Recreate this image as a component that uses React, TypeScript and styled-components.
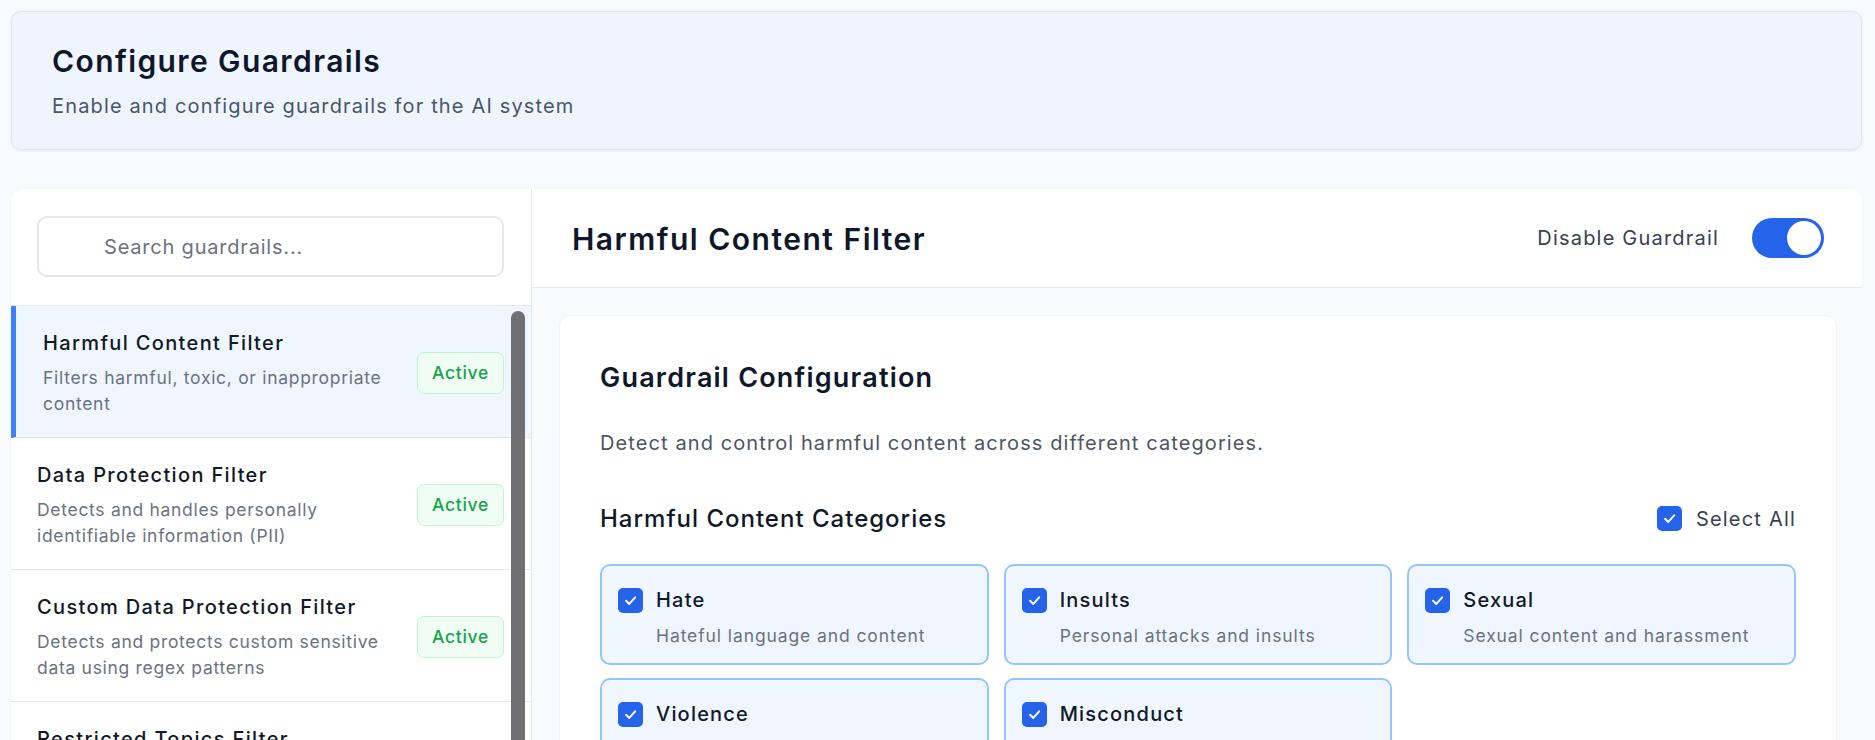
import React from 'react';
import styled, { createGlobalStyle } from 'styled-components';

const GlobalStyle = createGlobalStyle`
  * { box-sizing: border-box; }
  html, body {
    margin: 0;
    padding: 0;
    overflow: hidden;
    background: #f8fafc;
  }
  body {
    font-family: Inter, "Noto Sans", sans-serif;
    color: #111827;
    -webkit-font-smoothing: antialiased;
  }
`;

const Page = styled.div`
  padding: 11px 13px 0 11px;
`;

const Hero = styled.header`
  background: #eff5ff;
  border: 1px solid #dfe6f0;
  border-radius: 10px;
  box-shadow: 0 1px 3px rgba(15, 23, 42, 0.08);
  padding: 29px 40px 28px;
  margin-bottom: 39px;
`;

const HeroTitle = styled.h1`
  margin: 0;
  font-size: 30px;
  line-height: 40px;
  font-weight: 600;
  letter-spacing: 1.4px;
  color: #0f172a;
`;

const HeroText = styled.p`
  margin: 10px 0 0;
  font-size: 20px;
  line-height: 30px;
  letter-spacing: 1.15px;
  color: #475569;
`;

const Shell = styled.div`
  display: flex;
  background: #fff;
  border-radius: 12px;
  box-shadow: 0 1px 2px rgba(15, 23, 42, 0.04);
  overflow: hidden;
`;

const Sidebar = styled.aside`
  width: 521px;
  flex-shrink: 0;
  border-right: 1px solid #e5e7eb;
  display: flex;
  flex-direction: column;
`;

const SearchArea = styled.div`
  padding: 27px 27px 28px 26px;
  border-bottom: 1px solid #e5e7eb;
`;

const SearchInput = styled.input`
  width: 100%;
  height: 61px;
  border: 2px solid #e5e7eb;
  border-radius: 10px;
  padding: 0 16px 0 65px;
  font-family: inherit;
  font-size: 20px;
  letter-spacing: 0.8px;
  color: #111827;
  outline: none;
  &::placeholder { color: #6b7280; }
`;

const ListWrap = styled.div`
  position: relative;
  height: 640px;
`;

const List = styled.ul`
  list-style: none;
  margin: 0;
  padding: 0;
  height: 100%;
  overflow-y: auto;
  scrollbar-width: none;
`;

const ScrollThumb = styled.div`
  position: absolute;
  top: 5px;
  right: 6px;
  width: 14px;
  height: 520px;
  border-radius: 7px;
  background: rgba(96, 96, 100, 0.9);
`;

const Item = styled.li<{ $active?: boolean }>`
  display: flex;
  align-items: center;
  gap: 16px;
  padding: 22px 27px 20px ${p => (p.$active ? '27px' : '26px')};
  border-bottom: 1px solid #e5e7eb;
  border-left: ${p => (p.$active ? '5px solid #3b82f6' : 'none')};
  background: ${p => (p.$active ? '#eff6ff' : '#fff')};
`;

const ItemText = styled.div`
  flex: 1;
  min-width: 0;
`;

const ItemTitle = styled.div`
  font-size: 20px;
  line-height: 30px;
  font-weight: 500;
  letter-spacing: 1.35px;
  color: #111827;
`;

const ItemDesc = styled.div`
  margin-top: 7px;
  font-size: 17.5px;
  line-height: 26px;
  letter-spacing: 0.7px;
  color: #6b7280;
`;

const Badge = styled.span`
  flex-shrink: 0;
  padding: 7px 14px;
  border: 1px solid #bbf7d0;
  background: #f0fdf4;
  color: #16a34a;
  font-size: 17.5px;
  line-height: 26px;
  font-weight: 500;
  letter-spacing: 0.7px;
  border-radius: 7px;
`;

const Main = styled.section`
  flex: 1;
  display: flex;
  flex-direction: column;
  min-width: 0;
`;

const MainHeader = styled.div`
  height: 99px;
  padding: 0 38px 0 40px;
  display: flex;
  align-items: center;
  justify-content: space-between;
  border-bottom: 1px solid #e5e7eb;
  background: #fff;
`;

const MainTitle = styled.h2`
  margin: 2px 0 0;
  font-size: 30px;
  line-height: 40px;
  font-weight: 600;
  letter-spacing: 1.5px;
  color: #0f172a;
`;

const ToggleRow = styled.label`
  display: flex;
  align-items: center;
  gap: 33px;
  font-size: 20px;
  letter-spacing: 1.2px;
  color: #374151;
`;

const Toggle = styled.span<{ $on: boolean }>`
  width: 72px;
  height: 40px;
  border-radius: 20px;
  padding: 3px;
  display: flex;
  justify-content: ${p => (p.$on ? 'flex-end' : 'flex-start')};
  background: ${p => (p.$on ? '#2563eb' : '#d1d5db')};
  &::after {
    content: '';
    width: 34px;
    height: 34px;
    border-radius: 50%;
    background: #fff;
  }
`;

const Content = styled.div`
  flex: 1;
  background: #f8fafc;
  padding: 27px 25px 0 27px;
`;

const Card = styled.div`
  background: #fff;
  border-radius: 12px;
  border: 1px solid #f1f3f6;
  padding: 42px 40px 40px;
`;

const CardTitle = styled.h3`
  margin: 0;
  font-size: 27px;
  line-height: 40px;
  font-weight: 600;
  letter-spacing: 1.2px;
  color: #0f172a;
`;

const CardDesc = styled.p`
  margin: 30px 0 0;
  font-size: 20px;
  line-height: 30px;
  letter-spacing: 1.1px;
  color: #4b5563;
`;

const SectionHead = styled.div`
  margin-top: 43px;
  height: 35px;
  display: flex;
  align-items: center;
  justify-content: space-between;
`;

const SectionTitle = styled.h4`
  margin: 0;
  font-size: 24px;
  line-height: 35px;
  font-weight: 500;
  letter-spacing: 1px;
  color: #111827;
`;

const SelectAll = styled.label`
  display: flex;
  align-items: center;
  gap: 14px;
  font-size: 20px;
  letter-spacing: 1.2px;
  color: #374151;
`;

const Grid = styled.div`
  margin-top: 28px;
  display: grid;
  grid-template-columns: repeat(3, 1fr);
  gap: 13px 15px;
`;

const CatCard = styled.div`
  border: 2px solid #93c5fd;
  background: #eff6ff;
  border-radius: 10px;
  padding: 21px 18px 15px 16px;
`;

const CatRow = styled.div`
  display: flex;
  align-items: center;
  gap: 13px;
`;

const CatName = styled.span`
  font-size: 20px;
  line-height: 26px;
  font-weight: 500;
  letter-spacing: 1.2px;
  color: #111827;
`;

const CatDesc = styled.div`
  margin: 11px 0 0 38px;
  font-size: 17.5px;
  line-height: 24px;
  letter-spacing: 0.9px;
  color: #6b7280;
`;

const Box = styled.span`
  width: 25px;
  height: 25px;
  flex-shrink: 0;
  border-radius: 5px;
  background: #2563eb;
  display: inline-flex;
  align-items: center;
  justify-content: center;
`;

const Check = () => (
  <Box>
    <svg width="15" height="15" viewBox="0 0 24 24" fill="none" stroke="#fff" strokeWidth="3.2" strokeLinecap="round" strokeLinejoin="round">
      <polyline points="5 12.5 10 17.5 19.5 7" />
    </svg>
  </Box>
);

const guardrails = [
  { name: 'Harmful Content Filter', desc: 'Filters harmful, toxic, or inappropriate content' },
  { name: 'Data Protection Filter', desc: 'Detects and handles personally identifiable information (PII)' },
  { name: 'Custom Data Protection Filter', desc: 'Detects and protects custom sensitive data using regex patterns' },
  { name: 'Restricted Topics Filter', desc: 'Blocks conversations about restricted topics' },
  { name: 'Prompt Injection Filter', desc: 'Detects prompt injection and jailbreak attempts' },
  { name: 'Word Filter', desc: 'Blocks specific words and phrases' },
];

const categories = [
  { name: 'Hate', desc: 'Hateful language and content' },
  { name: 'Insults', desc: 'Personal attacks and insults' },
  { name: 'Sexual', desc: 'Sexual content and harassment' },
  { name: 'Violence', desc: 'Violent content and threats' },
  { name: 'Misconduct', desc: 'Criminal or unethical activity' },
];

export default function App() {
  return (
    <>
      <GlobalStyle />
      <Page>
        <Hero>
          <HeroTitle>Configure Guardrails</HeroTitle>
          <HeroText>Enable and configure guardrails for the AI system</HeroText>
        </Hero>

        <Shell>
          <Sidebar>
            <SearchArea>
              <SearchInput placeholder="Search guardrails..." />
            </SearchArea>
            <ListWrap>
              <List>
                {guardrails.map((g, i) => (
                  <Item key={g.name} $active={i === 0}>
                    <ItemText>
                      <ItemTitle>{g.name}</ItemTitle>
                      <ItemDesc>{g.desc}</ItemDesc>
                    </ItemText>
                    <Badge>Active</Badge>
                  </Item>
                ))}
              </List>
              <ScrollThumb />
            </ListWrap>
          </Sidebar>

          <Main>
            <MainHeader>
              <MainTitle>Harmful Content Filter</MainTitle>
              <ToggleRow>
                Disable Guardrail
                <Toggle $on />
              </ToggleRow>
            </MainHeader>
            <Content>
              <Card>
                <CardTitle>Guardrail Configuration</CardTitle>
                <CardDesc>Detect and control harmful content across different categories.</CardDesc>
                <SectionHead>
                  <SectionTitle>Harmful Content Categories</SectionTitle>
                  <SelectAll>
                    <Check />
                    Select All
                  </SelectAll>
                </SectionHead>
                <Grid>
                  {categories.map(c => (
                    <CatCard key={c.name}>
                      <CatRow>
                        <Check />
                        <CatName>{c.name}</CatName>
                      </CatRow>
                      <CatDesc>{c.desc}</CatDesc>
                    </CatCard>
                  ))}
                </Grid>
              </Card>
            </Content>
          </Main>
        </Shell>
      </Page>
    </>
  );
}
